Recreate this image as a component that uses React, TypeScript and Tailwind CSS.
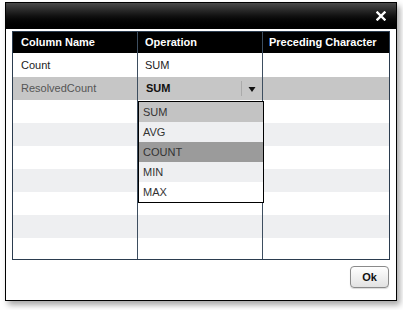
import React from "react";

const rows = [
  { name: "Count", op: "SUM" },
  { name: "ResolvedCount", op: "SUM", selected: true },
  {}, {}, {}, {}, {}, {}, {},
];

const options = [
  { label: "SUM", bg: "bg-[#c3c3c3]" },
  { label: "AVG", bg: "bg-[#eeeff1]" },
  { label: "COUNT", bg: "bg-[#9b9b9b]" },
  { label: "MIN", bg: "bg-[#eeeff1]" },
  { label: "MAX", bg: "bg-white" },
];

export default function App() {
  return (
    <div className="w-[403px] h-[310px] bg-white pt-[2px] pl-[5px] font-['Liberation_Sans',Arial,sans-serif]">
      <div className="w-[392px] h-[299px] border border-black bg-white shadow-[3px_4px_6px_rgba(0,0,0,0.35)] flex flex-col">
        {/* title bar */}
        <div className="h-[26px] bg-gradient-to-b from-[#4a4a4a] via-[#111] to-black flex items-center justify-end pr-[10px]">
          <svg width="10" height="10" viewBox="0 0 10 10">
            <path d="M1.5 1.5 L8.5 8.5 M8.5 1.5 L1.5 8.5" stroke="white" strokeWidth="2.4" strokeLinecap="square" />
          </svg>
        </div>

        {/* table */}
        <div className="relative ml-[6px] mt-[2px] w-[378px] h-[229px] border border-[#2b3c4f] flex flex-col">
          <div className="grid grid-cols-[125px_125px_1fr] h-[21px] bg-black text-white text-[11px] font-bold">
            <div className="pl-[8px] flex items-center border-r border-[#3d4e60]">Column Name</div>
            <div className="pl-[7px] flex items-center border-r border-[#3d4e60]">Operation</div>
            <div className="pl-[6px] flex items-center">Preceding Character</div>
          </div>
          <div className="flex-1 overflow-hidden">
            {rows.map((r, i) => {
              const bg = r.selected
                ? "bg-[#c6c6c6]"
                : i % 2 === 1
                ? "bg-[#eeeff1]"
                : "bg-white";
              const h = i === 0 ? "h-[24px]" : "h-[23px]";
              return (
                <div key={i} className={`grid grid-cols-[125px_125px_1fr] ${h} ${bg} text-[11px]`}>
                  <div className={`pl-[8px] flex items-center border-r border-[#3d4e60] ${r.selected ? "text-[#555]" : "text-[#222]"}`}>
                    {r.name}
                  </div>
                  <div className="flex items-center border-r border-[#3d4e60]">
                    {r.selected ? (
                      <div className="flex items-center w-full h-full">
                        <span className="pl-[8px] font-bold text-[#111] flex-1">{r.op}</span>
                        <span className="w-px h-[15px] bg-[#aaa]" />
                        <svg width="20" height="8" viewBox="0 0 20 8">
                          <path d="M6.5 2 L13.5 2 L10 7 Z" fill="#111" />
                        </svg>
                      </div>
                    ) : (
                      <span className="pl-[7px] text-[#222]">{r.op}</span>
                    )}
                  </div>
                  <div />
                </div>
              );
            })}
          </div>

          {/* dropdown list */}
          <div className="absolute left-[125px] top-[69px] w-[126px] border border-black bg-white text-[11px] text-[#333]">
            {options.map((o) => (
              <div key={o.label} className={`h-[20px] pl-[4px] flex items-center ${o.bg}`}>
                {o.label}
              </div>
            ))}
          </div>
        </div>

        {/* footer */}
        <div className="flex justify-end pr-[7px] pt-[6px]">
          <button className="w-[39px] h-[22px] rounded-[4px] border border-[#8a8a8a] bg-gradient-to-b from-white to-[#e2e2e2] text-[11px] font-bold text-[#111] shadow-[0_1px_1px_rgba(0,0,0,0.15)]">
            Ok
          </button>
        </div>
      </div>
    </div>
  );
}
